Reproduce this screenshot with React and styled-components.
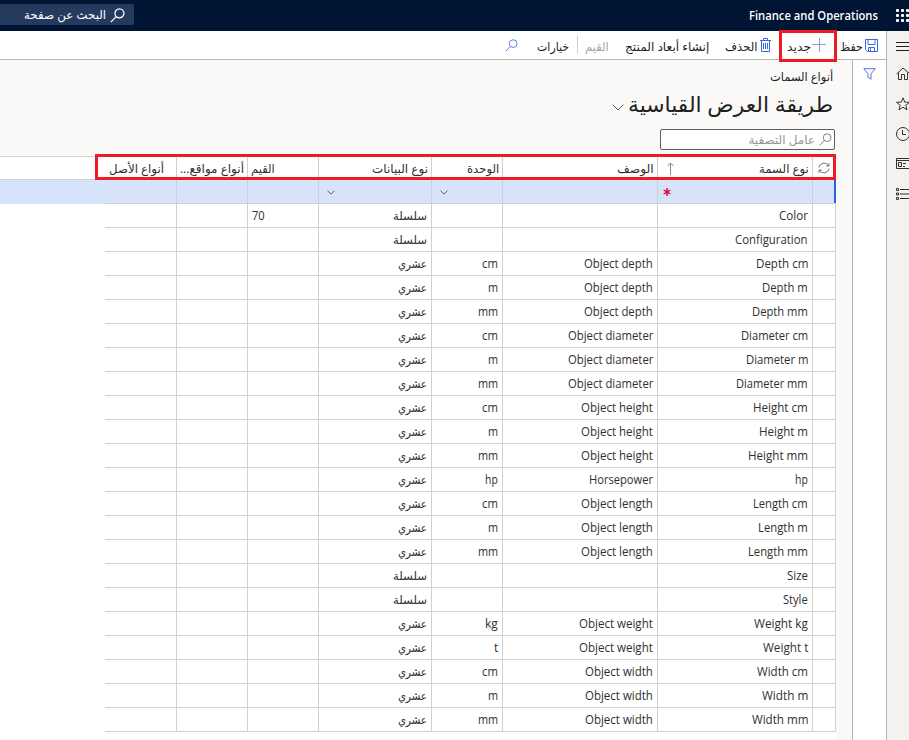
import React, { useLayoutEffect, useRef, useState } from "react";
import styled, { createGlobalStyle } from "styled-components";

const Global = createGlobalStyle`
  *, *::before, *::after { box-sizing: border-box; }
  body { margin: 0; overflow: hidden; background: #faf9f8; }
  svg { display: block; flex: none; }
`;

const App_ = styled.div`
  width: 909px;
  height: 740px;
  overflow: hidden;
  display: flex;
  flex-direction: column;
  font-family: "Open Sans", "DejaVu Sans", sans-serif;
  font-size: 12px;
  color: #201f1e;
`;

/* Text */
const FitBox = styled.span`
  display: inline-flex;
  flex: none;
  justify-content: flex-start;
  width: ${(p) => p.$w}px;
  height: 1.4em;
  line-height: 1.4em;
  white-space: nowrap;
`;
const FitInner = styled.span`
  flex: none;
  transform-origin: ${(p) => (p.$ltr ? "left" : "right")} center;
`;
function Fit({ w, ltr, children }) {
  const ref = useRef(null);
  const [scale, setScale] = useState(1);
  useLayoutEffect(() => {
    setScale(w / ref.current.offsetWidth);
  }, [w]);
  return (
    <FitBox $w={w} dir={ltr ? "ltr" : "rtl"}>
      <FitInner ref={ref} $ltr={ltr} style={{ transform: `scaleX(${scale})` }}>
        {children}
      </FitInner>
    </FitBox>
  );
}

/* Top bar */
const TopBar = styled.header`
  height: 31px;
  flex: none;
  background: #001433;
  color: #fff;
  display: flex;
  align-items: center;
  justify-content: space-between;
`;
const PageSearch = styled.div`
  width: 134px;
  height: 21px;
  margin-bottom: 2px;
  background: #243a5e;
  border-radius: 0 2px 2px 0;
  display: flex;
  align-items: center;
  justify-content: flex-end;
  gap: 4px;
  padding: 2px 9px 0 0;
`;
const Brand = styled.div`
  display: flex;
  align-items: center;
  gap: 18px;
  width: 160px;
  padding-top: 1px;
  font-weight: 600;
`;

/* Frame */
const Frame = styled.div`
  flex: 1;
  display: flex;
  min-height: 0;
`;
const Workspace = styled.div`
  width: 886px;
  flex: none;
  display: flex;
  flex-direction: column;
`;
const SideNav = styled.nav`
  width: 40px;
  flex: none;
  background: #f3f2f1;
  border-left: 1px solid #b8b5b2;
  padding: 8px 0 0 9px;
  display: flex;
  flex-direction: column;
  gap: 14px;
`;
const Toolbar = styled.div`
  height: 29px;
  flex: none;
  background: #fff;
  border-bottom: 1px solid #b8b5b2;
  direction: rtl;
  display: flex;
  align-items: center;
  padding-right: 8px;
`;
const ToolButton = styled.button`
  position: relative;
  height: 28px;
  border: 0;
  padding: 0;
  background: none;
  font: inherit;
  color: ${(p) => (p.$muted ? "#a6a4a2" : "#201f1e")};
  display: flex;
  align-items: center;
  gap: ${(p) => p.$gap || 0}px;
  margin-right: ${(p) => p.$before || 0}px;
`;
const ButtonText = styled.span`
  display: flex;
  padding-top: 4px;
`;
const Divider = styled.span`
  width: 1px;
  height: 18px;
  background: #d2d0ce;
  margin-right: 7px;
`;
const Body = styled.div`
  flex: 1;
  display: flex;
  min-height: 0;
`;
const Content = styled.main`
  width: 852px;
  flex: none;
  background: #faf9f8;
  direction: rtl;
  display: flex;
  flex-direction: column;
`;
const FilterRail = styled.aside`
  flex: 1;
  background: #fff;
  border-left: 1px solid #b8b5b2;
  padding: 8px 0 0 10px;
`;

/* Heading */
const Caption = styled.div`
  display: flex;
  height: 17px;
  margin: 8px 19px 0 0;
  padding-top: 1px;
`;
const Title = styled.h1`
  display: flex;
  align-items: center;
  gap: 4px;
  height: 40px;
  margin: 0 19px 0 0;
  font-size: 21px;
  font-weight: 400;

  svg { margin-top: 4px; }
`;
const FilterInput = styled.div`
  width: 175px;
  height: 21px;
  margin: 4px 17px 6px 0;
  border: 1px solid #605e5c;
  border-radius: 2px;
  background: #fff;
  color: #979593;
  display: flex;
  align-items: center;
  gap: 4px;
  padding-right: 2px;
  padding-top: 1px;

  svg { margin-bottom: 2px; }
`;

/* Grid */
const GridArea = styled.section`
  position: relative;
  width: 836px;
  margin-right: 16px;
  flex: 1;
  background: #fff;
  border-top: 1px solid #d2d0ce;
`;
const Row = styled.div`
  display: grid;
  grid-template-columns: 23px 155px 155px 71px 113px 71px 71px 71px;
  grid-template-rows: 100%;
  width: ${(p) => (p.$full ? "836px" : "731px")};
  height: ${(p) => (p.$head ? 23 : 24)}px;
  border-right: 1px solid #d2d0ce;
  background: ${(p) => (p.$active ? "#d7e3fb" : "#fff")};
  border-bottom: ${(p) => (p.$head ? "1px solid #d2d0ce" : "0")};
  color: #302f2e;
`;
const Cell = styled.div`
  display: flex;
  align-items: center;
  min-width: 0;
  padding: ${(p) => (p.$head ? "3px 3px 0 8px" : "1px 4px 0 8px")};
  justify-content: ${(p) => (p.$end ? "flex-end" : "space-between")};
  ${(p) => p.$end && "padding-left: 4px;"}
  ${(p) => p.$left && "padding-left: " + p.$left + "px;"}
  ${(p) => !p.$last && "border-left: 1px solid #d2d0ce;"}
  ${(p) => !p.$head && "border-bottom: 1px solid #d2d0ce;"}
`;
const RefreshCell = styled.div`
  display: flex;
  align-items: center;
  padding: 0 5px;
  border-left: 1px solid #d2d0ce;
`;
const ActiveMark = styled.div`
  position: relative;
  border-left: 1px solid #d2d0ce;
  border-bottom: 1px solid #d2d0ce;

  &::after {
    content: "";
    position: absolute;
    top: 0;
    right: -1px;
    width: 2px;
    height: 23px;
    background: #2266e3;
  }
`;
const RedBox = styled.div`
  position: absolute;
  border: 3px solid #ed1c24;
  pointer-events: none;
  ${(p) =>
    p.$grid
      ? "left: 95px; top: -3px; width: 741px; height: 26px;"
      : "left: -8px; top: -1px; width: 58px; height: 32px;"}
  z-index: 2;
`;

/* Icons */
const Svg = ({ w, h, c = "#323130", sw = 1, children }) => (
  <svg width={w} height={h} viewBox={`0 0 ${w} ${h}`} fill="none" stroke={c} strokeWidth={sw}>
    {children}
  </svg>
);
const Magnifier = ({ s = 14, c, sw }) => (
  <svg width={s} height={s} viewBox="0 0 14 14" fill="none" stroke={c} strokeWidth={sw || 1}>
    <circle cx="8.8" cy="5" r="4.2" />
    <path d="M5.8 8 L0.8 13.2" />
  </svg>
);
const Chevron = ({ w = 8, c = "#605e5c" }) => (
  <svg width={w} height={w / 2 + 1} viewBox="0 0 12 7" fill="none" stroke={c} strokeWidth={12 / w}>
    <path d="M0.7 0.7 L6 6 L11.3 0.7" />
  </svg>
);
const Waffle = () => (
  <svg width="14" height="14" fill="#fff">
    {[0, 5, 10].map((y) => [0, 5, 10].map((x) => <rect key={x + "-" + y} x={x} y={y} width="3" height="3" rx="1" />))}
  </svg>
);

const ROWS = [
  ["Color", 29, "", 0, "", 0, 0, "70"],
  ["Configuration", 73, "", 0, "", 0, 0],
  ["Depth cm", 52, "Object depth", 69, "cm", 16, 1],
  ["Depth m", 46, "Object depth", 69, "m", 10, 1],
  ["Depth mm", 56, "Object depth", 69, "mm", 20, 1],
  ["Diameter cm", 67, "Object diameter", 85, "cm", 16, 1],
  ["Diameter m", 62, "Object diameter", 85, "m", 10, 1],
  ["Diameter mm", 72, "Object diameter", 85, "mm", 20, 1],
  ["Height cm", 55, "Object height", 72, "cm", 16, 1],
  ["Height m", 49, "Object height", 72, "m", 10, 1],
  ["Height mm", 60, "Object height", 72, "mm", 20, 1],
  ["hp", 13, "Horsepower", 64, "hp", 13, 1],
  ["Length cm", 55, "Object length", 72, "cm", 16, 1],
  ["Length m", 50, "Object length", 72, "m", 10, 1],
  ["Length mm", 60, "Object length", 72, "mm", 20, 1],
  ["Size", 21, "", 0, "", 0, 0],
  ["Style", 25, "", 0, "", 0, 0],
  ["Weight kg", 54, "Object weight", 74, "kg", 13, 1],
  ["Weight t", 45, "Object weight", 74, "t", 4, 1],
  ["Width cm", 51, "Object width", 68, "cm", 16, 1],
  ["Width m", 46, "Object width", 68, "m", 10, 1],
  ["Width mm", 56, "Object width", 68, "mm", 20, 1],
];

export default function App() {
  return (
    <App_>
      <Global />
      <TopBar>
        <PageSearch>
          <Fit w={82}>البحث عن صفحة</Fit>
          <Magnifier s={15} c="#fff" sw={1.2} />
        </PageSearch>
        <Brand>
          <Fit w={129} ltr>Finance and Operations</Fit>
          <Waffle />
        </Brand>
      </TopBar>
      <Frame>
        <Workspace>
          <Toolbar>
            <ToolButton $gap={2}>
              <Svg w={13} h={13} c="#3b67df">
                <path d="M.5 .5h12v12h-10l-2-2zM3 .5v5h7v-5M3.5 12.5v-4h6v4M5.5 9v3" />
              </Svg>
              <ButtonText><Fit w={23}>حفظ</Fit></ButtonText>
            </ToolButton>
            <ToolButton $before={14} $gap={1}>
              <Svg w={14} h={14} c="#8f9de6">
                <path d="M7.5 0v14M0 6.5h14" />
              </Svg>
              <ButtonText><Fit w={24}>جديد</Fit></ButtonText>
              <RedBox />
            </ToolButton>
            <ToolButton $before={15} $gap={2}>
              <Svg w={13} h={14} c="#3b67df">
                <path d="M1 2.5h11M4.5 2V.5h4V2M2.5 2.5v11h8v-11M4.5 5v6M6.5 5v6M8.5 5v6" />
              </Svg>
              <ButtonText><Fit w={32}>الحذف</Fit></ButtonText>
            </ToolButton>
            <ToolButton $before={16}><ButtonText><Fit w={84}>إنشاء أبعاد المنتج</Fit></ButtonText></ToolButton>
            <ToolButton $muted $before={16}><ButtonText><Fit w={24}>القيم</Fit></ButtonText></ToolButton>
            <Divider />
            <ToolButton $before={8}><ButtonText><Fit w={32}>خيارات</Fit></ButtonText></ToolButton>
            <ToolButton $before={19}><Magnifier s={13} c="#5577e2" /></ToolButton>
          </Toolbar>
          <Body>
            <Content>
              <Caption><Fit w={63}>أنواع السمات</Fit></Caption>
              <Title><Fit w={205}>طريقة العرض القياسية</Fit><Chevron w={12} /></Title>
              <FilterInput><Magnifier s={13} c="#7a7876" /><Fit w={67}>عامل التصفية</Fit></FilterInput>
              <GridArea>
                <Row $head $full>
                  <RefreshCell>
                    <Svg w={12} h={12} c="#7a7876">
                      <path d="M1 5.5a5 4.6 0 0 1 9.6-1.5M11 1v3H8M11 6.5a5 4.6 0 0 1-9.6 1.5M1 11v-3h3" />
                    </Svg>
                  </RefreshCell>
                  <Cell $head>
                    <Fit w={50}>نوع السمة</Fit>
                    <Svg w={8} h={16} c="#8a8886"><path d="M4.5 13V1M1.5 4l3-3 3 3" /></Svg>
                  </Cell>
                  <Cell $head><Fit w={37}>الوصف</Fit></Cell>
                  <Cell $head><Fit w={32}>الوحدة</Fit></Cell>
                  <Cell $head><Fit w={56}>نوع البيانات</Fit></Cell>
                  <Cell $head $end $left={3}><Fit w={24}>القيم</Fit></Cell>
                  <Cell $head $left={3}><Fit w={64}>أنواع مواقع...</Fit></Cell>
                  <Cell $head $last $end $left={4}><Fit w={55}>أنواع الأصل</Fit></Cell>
                </Row>
                <Row $active $full>
                  <ActiveMark />
                  <Cell $end $left={5}>
                    <Svg w={8} h={8} c="#e0002b" sw={1.4}>
                      <path d="M4 0v8M.6 2l6.8 4M7.4 2L.6 6" />
                    </Svg>
                  </Cell>
                  <Cell />
                  <Cell $end $left={8}><Chevron /></Cell>
                  <Cell $end $left={8}><Chevron /></Cell>
                  <Cell />
                  <Cell />
                  <Cell $last />
                </Row>
                {ROWS.map(([name, nw, desc, dw, unit, uw, dec, count]) => (
                  <Row key={name}>
                    <Cell />
                    <Cell><Fit w={nw} ltr>{name}</Fit></Cell>
                    <Cell>{desc && <Fit w={dw} ltr>{desc}</Fit>}</Cell>
                    <Cell>{unit && <Fit w={uw} ltr>{unit}</Fit>}</Cell>
                    <Cell>{dec ? <Fit w={29}>عشري</Fit> : <Fit w={34}>سلسلة</Fit>}</Cell>
                    <Cell $end>{count && <Fit w={13} ltr>{count}</Fit>}</Cell>
                    <Cell />
                    <Cell $last />
                  </Row>
                ))}
                <RedBox $grid />
              </GridArea>
            </Content>
            <FilterRail>
              <Svg w={13} h={12} c="#5c6fe0"><path d="M.8 .7h11.4L8 5.8v5.4L5 9.3V5.8z" /></Svg>
            </FilterRail>
          </Body>
        </Workspace>
        <SideNav>
          <Svg w={15} h={13} c="#201f1e"><path d="M0 3.5h15M0 7.5h15M0 11.5h15" /></Svg>
          <Svg w={15} h={16}><path d="M.5 8L7 2l7 6M2.5 6.5v7h3v-5h3v5h3v-7" /></Svg>
          <Svg w={15} h={16}><path d="M7 1.8l1.7 4.3 4.8.2-3.7 3 1.2 4.5-4-2.6-4 2.6 1.2-4.5-3.7-3 4.8-.2z" /></Svg>
          <Svg w={15} h={16}><circle cx="7" cy="8" r="6.5" /><path d="M6.5 4v4.5H10" /></Svg>
          <Svg w={15} h={16}><path d="M15 2.5H.5v10H15M.5 4.5H15M2.5 6.5h3v4h-3zM7 7.5h3M7 10.5h2" /></Svg>
          <Svg w={15} h={16}><path d="M.5 2.5h2v2h-2zM.5 7h2v2h-2zM.5 11.5h2v2h-2zM4 3.5h11M4 8h11M4 12.5h11" /></Svg>
        </SideNav>
      </Frame>
    </App_>
  );
}
